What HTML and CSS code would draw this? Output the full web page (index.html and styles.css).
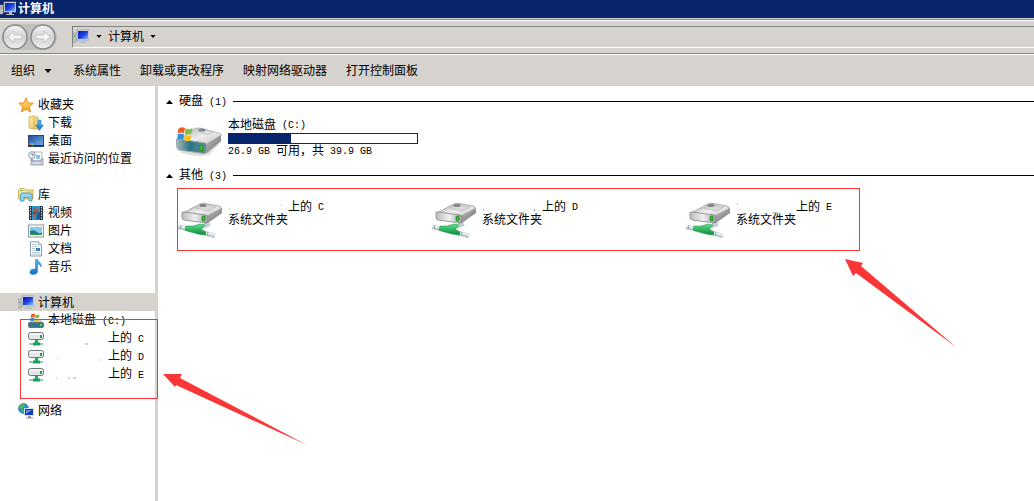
FILE: index.html
```html
<!DOCTYPE html>
<html lang="zh-CN">
<head>
<meta charset="utf-8">
<title>计算机</title>
<link rel="stylesheet" href="styles.css">
</head>
<body>
<svg class="defs" aria-hidden="true">
  <defs>
    <linearGradient id="g-screen" x1="0" y1="0" x2="1" y2="1"><stop offset="0" stop-color="#0a20b0"/><stop offset=".5" stop-color="#1a3ee0"/><stop offset="1" stop-color="#8ab4f8"/></linearGradient>
    <linearGradient id="g-star" x1="0" y1="0" x2="0" y2="1"><stop offset="0" stop-color="#ffe680"/><stop offset="1" stop-color="#f9a01b"/></linearGradient>
    <linearGradient id="g-folder" x1="0" y1="0" x2="1" y2="1"><stop offset="0" stop-color="#fdf3b8"/><stop offset="1" stop-color="#e5bd4c"/></linearGradient>
    <linearGradient id="g-desk" x1="0" y1="0" x2="1" y2="1"><stop offset="0" stop-color="#1b4a9c"/><stop offset="1" stop-color="#7db4ee"/></linearGradient>
    <linearGradient id="g-blue" x1="0" y1="0" x2="0" y2="1"><stop offset="0" stop-color="#54b8f0"/><stop offset="1" stop-color="#1272c0"/></linearGradient>
    <linearGradient id="g-top" x1="0" y1="0" x2="1" y2="1"><stop offset="0" stop-color="#a8a8a8"/><stop offset=".5" stop-color="#eeeeee"/><stop offset="1" stop-color="#bdbdbd"/></linearGradient>
    <linearGradient id="g-front" x1="0" y1="0" x2="1" y2="0"><stop offset="0" stop-color="#bcbcbe"/><stop offset=".5" stop-color="#f0f0f4"/><stop offset="1" stop-color="#a4a4a8"/></linearGradient>
    <linearGradient id="g-teal" x1="0" y1="0" x2="1" y2="0"><stop offset="0" stop-color="#a9bcc2"/><stop offset=".45" stop-color="#2a7488"/><stop offset="1" stop-color="#6c9294"/></linearGradient>
    <linearGradient id="g-side" x1="0" y1="0" x2="1" y2="1"><stop offset="0" stop-color="#c8c8c8"/><stop offset="1" stop-color="#6c6c6c"/></linearGradient>
    <linearGradient id="g-nav" x1="0" y1="0" x2="0" y2="1"><stop offset="0" stop-color="#f4f4f4"/><stop offset=".5" stop-color="#d2d2d2"/><stop offset="1" stop-color="#eeeeee"/></linearGradient>
    <linearGradient id="g-green" x1="0" y1="0" x2="0" y2="1"><stop offset="0" stop-color="#5fe08a"/><stop offset="1" stop-color="#0a8a3c"/></linearGradient>

    <symbol id="i-pc" viewBox="0 0 16 16">
      <rect x="0" y="4" width="3" height="9" fill="#c9cdd0" stroke="#888" stroke-width=".6"/><rect x="1" y="6" width="1" height="2" fill="#35c83a"/>
      <rect x="4" y="1" width="12" height="10" fill="#e4e8ee" stroke="#8d96a3" stroke-width=".7"/>
      <rect x="5" y="2" width="10" height="8" fill="url(#g-screen)"/>
      <path d="M9 11h3v2h2v1H6v-1h3z" fill="#b7bec6"/>
    </symbol>
    <symbol id="i-star" viewBox="0 0 16 16"><path d="M8 .8l2 5 5.300.4-4 3.500 1.300 5.300L8 12.100l-4.600 2.900 1.300-5.300-4-3.500L6 5.800z" fill="url(#g-star)" stroke="#e08a1c" stroke-width=".9"/></symbol>
    <symbol id="i-down" viewBox="0 0 16 16"><path d="M1 2l5-1.500 1 1.500h3v12H6l-5-1z" fill="url(#g-folder)" stroke="#cfa23c" stroke-width=".7"/><path d="M6 2v12" stroke="#d9b352"/><path d="M10 5h3v5h2.500l-4 5.500-4-5.500H10z" fill="url(#g-blue)" stroke="#2b7cc0" stroke-width=".5"/></symbol>
    <symbol id="i-desk" viewBox="0 0 16 16"><rect x=".5" y="2.500" width="15" height="11" fill="url(#g-desk)" stroke="#2a4670"/><path d="M1 12h14v1H1z" fill="#16305c"/><path d="M1.500 10h2v2h-2z" fill="#f1802c"/><path d="M3.500 10.500h2v2h-2z" fill="#7ed04c"/></symbol>
    <symbol id="i-recent" viewBox="0 0 16 16"><path d="M5 1h9v9H5z" fill="#fafcfe" stroke="#8ea2b4" stroke-width=".8"/><path d="M8 4h4v4H8z" fill="#8cc4ea"/><circle cx="4" cy="4" r="3.300" fill="#f3f6f8" stroke="#8a9aa8"/><path d="M4 2v2h2" fill="none" stroke="#456" stroke-width=".8"/><path d="M4 8v2h9V8h2v6H3V8z" fill="#c9d2da" stroke="#7c8b98" stroke-width=".7"/><path d="M6 12h6" stroke="#eee"/></symbol>
    <symbol id="i-lib" viewBox="0 0 16 16"><path d="M.500 3l1-1.500h5L8 3h7v9H.500z" fill="url(#g-folder)" stroke="#d0a340" stroke-width=".8"/><path d="M2 3.500h3" stroke="#5fbf4e"/><path d="M2.500 14V8l1-2h9l1.500 2v6h-3v-3.500h-5V14z" fill="#8dd5f5" stroke="#3b96c9" stroke-width=".8"/></symbol>
    <symbol id="i-video" viewBox="0 0 16 16"><path d="M1 1h14v14H1z" fill="#26343e"/><path d="M4 1h8v14H4z" fill="#2e94cc"/><path d="M5 3l3 1 2-1 1 4-3 1-1 4-2-1z" fill="#b0593c"/><path d="M9 9l3-1v6l-4 1z" fill="#175c96"/><path d="M4 8h8" stroke="#20303c" stroke-width=".7"/><path d="M2.500 2v13M13.500 2v13" stroke="#eef" stroke-dasharray="1.300 1.300"/></symbol>
    <symbol id="i-image" viewBox="0 0 16 16"><rect x=".5" y="2" width="15" height="12" fill="#fff" stroke="#8c989f"/><path d="M2 4h12v8H2z" fill="#85c9ee"/><path d="M2 8q4-2 7 1t5 0v3H2z" fill="#187c8c"/><path d="M2 10q6 2 12 0v2H2z" fill="#2b9950"/></symbol>
    <symbol id="i-doc" viewBox="0 0 16 16"><path d="M2.500.8h8l3 3V15h-11z" fill="#fcfdff" stroke="#7f93a5" stroke-width=".9"/><path d="M10.500.8v3h3" fill="#d8e4ee" stroke="#7f93a5" stroke-width=".7"/><path d="M4 3.500h5M4 5.500h5M4 7.500h3M4 9.500h3M4 11.500h8M4 13.200h8" stroke="#9eb0bf" stroke-width=".7"/><path d="M8 7h4v3H8z" fill="#2e83cc"/></symbol>
    <symbol id="i-music" viewBox="0 0 16 16"><path d="M7.500.5h2c.5 2.500 4.500 3.200 3.700 7.500-1-2-2.200-2.700-3.700-3v7.500c0 2-2 3-4.300 3S1.500 14.500 2 12.500s3-3 5.500-2.200z" fill="url(#g-blue)" stroke="#1d78bd" stroke-width=".5"/></symbol>
    <symbol id="i-flag" viewBox="0 0 16 16"><path d="M1 3q3-3 7-1L7 8Q4 6 0 8z" fill="#ee5a24"/><path d="M8.500 2.500Q12 4.500 16 2l-1 6q-4 2-7 .5z" fill="#7cc142"/><path d="M0 9q4-2 7 0l-1 6q-3-2-6-.5z" fill="#2f92e0"/><path d="M7.700 9.500q4 2 7 .5l-1 5.500q-4 1.500-7-.5z" fill="#fcc423"/></symbol>
    <symbol id="i-sys" viewBox="0 0 16 16"><path d="M2 8l2-2h8l3 3H1z" fill="#ccc"/><rect x=".5" y="9.500" width="15" height="5" rx="1" fill="#33788c" stroke="#627680"/><path d="M12 11h2v2h-2z" fill="#58e040"/><use href="#i-flag" x="2" y="0" width="10" height="9"/></symbol>
    <symbol id="i-net" viewBox="0 0 16 16"><rect x=".5" y="1.500" width="15" height="7" rx="2" fill="#e4e6e8" stroke="#73777b"/><path d="M2 3h12" stroke="#fff"/><path d="M12 4h2v3h-2z" fill="#22a82a"/><path d="M7 9h3v3H7z" fill="#16a761"/><path d="M1 12h14v2H1z" fill="#8bcdae"/><path d="M5 11.500h7v3H5z" fill="#11a45b"/></symbol>
    <symbol id="i-network" viewBox="0 0 16 16"><circle cx="5.500" cy="5.500" r="5" fill="#2b8fd8" stroke="#246aa6" stroke-width=".6"/><path d="M2 2q3-2 5 0L5 5 3 6 1 5zM3 7l3 1-1 2.500z" fill="#53bb4c"/><path d="M6.500 5.500h9v7h-9z" fill="#1537ba" stroke="#dbe3ec"/><path d="M8 7h6L8 11z" fill="#5d91ee"/><path d="M10 13h3v1.500h2v1H8v-1h2z" fill="#8d9aa6"/></symbol>
    <symbol id="i-cdrive" viewBox="0 0 46 34">
      <path d="M3 29q16 6 30 3l13-14-12 4z" fill="#999" opacity=".3"/>
      <path d="M1 17L18 6q3-1.500 6-1l19 5q3 1 2 3L30 23z" fill="url(#g-top)" stroke="#999" stroke-width=".6"/>
      <path d="M21 8l6-2 11 3-6 3z" fill="#dedede" stroke="#aaa" stroke-width=".5"/><ellipse cx="26" cy="7" rx="3.500" ry="1.500" fill="#7d868d"/>
      <path d="M30 21l15-9v6L31 30h-3z" fill="url(#g-side)"/>
      <path d="M0 17q0-2 3-1l26 4q2 .5 2 3l-.5 6q-.5 2-3 1.500L3 27q-2-.5-2-3z" fill="url(#g-teal)" stroke="#a4a4a4" stroke-width="1"/>
      <rect x="24" y="22" width="3" height="6" rx="1" fill="#35d32c" stroke="#155718" stroke-width=".6"/>
      <use href="#i-flag" x="1" y="3" width="16" height="15"/>
    </symbol>
    <symbol id="i-ndrive" viewBox="0 0 46 38">
      <path d="M17 29l15-6" stroke="#c3cfd3" stroke-width="4"/>
      <g transform="translate(3 1)">
      <path d="M2 11L19 2q2-1 5-.5L38 4q3 1 2 3L25 16z" fill="url(#g-top)" stroke="#8d8d8d" stroke-width=".7"/>
      <path d="M15 6l8-3 12 2-8 4z" fill="#d8d8d8" stroke="#aaa" stroke-width=".5"/><ellipse cx="22" cy="3.500" rx="3.500" ry="1.300" fill="#77777c"/>
      <path d="M25 14L41 6v5L27 21l-4 1z" fill="url(#g-side)"/>
      <path d="M1 11q0-1.500 2-1l22 3q2 .5 2 2.500l-.5 4q-.5 1.700-3 1.200L3 18q-2-.5-2-2.500z" fill="url(#g-front)" stroke="#858588" stroke-width=".8"/>
      <rect x="21" y="14" width="3" height="5" rx="1" fill="#2fc729" stroke="#1a5e1e" stroke-width=".6"/>
      </g>
      <path d="M0 26l9 2M26 32l11 3" stroke="#bccacf" stroke-width="4.500"/><path d="M0 25l9 2M26 31l11 3" stroke="#f2f6f6" stroke-width="1.500"/>
      <path d="M3 24l-1 4M30 31l-1 4" stroke="#93a5ac" stroke-width="1"/>
      <path d="M8 25l7 0 7-2 5 1-4 4 5 3-1 3-7-1-11-3-2-1z" fill="url(#g-green)" stroke="#0d9346" stroke-width=".5"/>
    </symbol>
    <symbol id="i-caret" viewBox="0 0 7 4"><path d="M0 0h7L3.500 4z" fill="#000"/></symbol>
    <symbol id="i-up" viewBox="0 0 7 4"><path d="M0 4h7L3.500 0z" fill="#000"/></symbol>
  </defs>
</svg>

<header class="titlebar"><svg class="icon"><use href="#i-pc"/></svg><h1>计算机</h1></header>

<nav class="navbar" aria-label="地址">
  <div class="history">
    <button type="button" aria-label="后退"><svg viewBox="0 0 26 26"><circle cx="13" cy="13" r="12" fill="url(#g-nav)" stroke="#858a8e" stroke-width="1.500"/><path d="M6 13l6-6v4h8v4h-8v4z" fill="#f4f4f4" stroke="#c4c4c4"/></svg></button>
    <button type="button" aria-label="前进"><svg viewBox="0 0 26 26"><circle cx="13" cy="13" r="12" fill="url(#g-nav)" stroke="#858a8e" stroke-width="1.500"/><path d="M20 13l-6-6v4H6v4h8v4z" fill="#f4f4f4" stroke="#c4c4c4"/></svg></button>
  </div>
  <div class="address">
    <svg class="icon"><use href="#i-pc"/></svg>
    <svg class="caret"><use href="#i-caret"/></svg>
    <button type="button">计算机</button>
    <svg class="caret"><use href="#i-caret"/></svg>
  </div>
</nav>

<div class="toolbar" role="toolbar">
  <button type="button" class="organize">组织<svg class="caret large"><use href="#i-caret"/></svg></button>
  <button type="button">系统属性</button>
  <button type="button">卸载或更改程序</button>
  <button type="button">映射网络驱动器</button>
  <button type="button">打开控制面板</button>
</div>

<div class="body">
  <aside class="sidebar">
    <ul class="tree">
      <li><a href="#fav"><svg class="icon"><use href="#i-star"/></svg>收藏夹</a>
        <ul>
          <li><a href="#downloads"><svg class="icon"><use href="#i-down"/></svg>下载</a></li>
          <li><a href="#desktop"><svg class="icon"><use href="#i-desk"/></svg>桌面</a></li>
          <li><a href="#recent"><svg class="icon"><use href="#i-recent"/></svg>最近访问的位置</a></li>
        </ul>
      </li>
      <li><a href="#lib"><svg class="icon"><use href="#i-lib"/></svg>库</a>
        <ul>
          <li><a href="#video"><svg class="icon"><use href="#i-video"/></svg>视频</a></li>
          <li><a href="#pictures"><svg class="icon"><use href="#i-image"/></svg>图片</a></li>
          <li><a href="#docs"><svg class="icon"><use href="#i-doc"/></svg>文档</a></li>
          <li><a href="#music"><svg class="icon"><use href="#i-music"/></svg>音乐</a></li>
        </ul>
      </li>
      <li><a href="#computer" class="selected"><svg class="icon"><use href="#i-pc"/></svg>计算机</a>
        <ul>
          <li><a href="#c"><svg class="icon"><use href="#i-sys"/></svg><span>本地磁盘<span class="latin"> (C:)</span></span></a></li>
          <li><a href="#nc"><svg class="icon"><use href="#i-net"/></svg><svg class="host" viewBox="0 0 56 12"><path d="M37 11h3" stroke="#aaa"/></svg><span>上的<span class="latin"> C</span></span></a></li>
          <li><a href="#nd"><svg class="icon"><use href="#i-net"/></svg><svg class="host" viewBox="0 0 56 12"><path d="M9 7h1M52 9h1" stroke="#aaa"/></svg><span>上的<span class="latin"> D</span></span></a></li>
          <li><a href="#ne"><svg class="icon"><use href="#i-net"/></svg><svg class="host" viewBox="0 0 56 12"><path d="M8 9h1M20 9h2M25 9h3" stroke="#aaa"/></svg><span>上的<span class="latin"> E</span></span></a></li>
        </ul>
      </li>
      <li><a href="#network"><svg class="icon"><use href="#i-network"/></svg>网络</a></li>
    </ul>
  </aside>

  <main class="content">
    <section>
      <h2><svg class="caret"><use href="#i-up"/></svg><span>硬盘<span class="latin"> (1)</span></span></h2>
      <div class="tiles disks">
        <article class="tile">
          <svg class="drive"><use href="#i-cdrive"/></svg>
          <div class="info">
            <p>本地磁盘<span class="latin"> (C:)</span></p>
            <div class="usage"><div class="used" style="width:33%"></div></div>
            <p><span class="latin">26.9 GB </span>可用，共<span class="latin"> 39.9 GB</span></p>
          </div>
        </article>
      </div>
    </section>
    <section>
      <h2><svg class="caret"><use href="#i-up"/></svg><span>其他<span class="latin"> (3)</span></span></h2>
      <div class="tiles shares">
        <article class="tile"><svg class="drive"><use href="#i-ndrive"/></svg><div class="info"><p><svg class="host" viewBox="0 0 60 12"><path d="M1 7h1M53 3h1" stroke="#aaa"/></svg>上的<span class="latin"> C</span></p><p>系统文件夹</p></div></article>
        <article class="tile"><svg class="drive"><use href="#i-ndrive"/></svg><div class="info"><p><svg class="host" viewBox="0 0 60 12"><path d="M1 8h1M37 11h5M52 9l1-2" stroke="#888"/></svg>上的<span class="latin"> D</span></p><p>系统文件夹</p></div></article>
        <article class="tile"><svg class="drive"><use href="#i-ndrive"/></svg><div class="info"><p><svg class="host" viewBox="0 0 60 12"><path d="M1 2h1M37 11h5" stroke="#888"/></svg>上的<span class="latin"> E</span></p><p>系统文件夹</p></div></article>
      </div>
    </section>
  </main>
</div>

<svg class="marks" width="1034" height="501" aria-hidden="true">
  <g fill="none" stroke="#fb3636"><rect x="20.5" y="319.500" width="137" height="79"/><rect x="177.500" y="188.500" width="682" height="62"/></g>
  <g fill="#fb3636"><path d="M163 374l19 0-2 4L307 445 176 385l-1 2z"/><path d="M845 259l18 4-2 3 95 81-100-74-3 3z"/></g>
</svg>
</body>
</html>
```
FILE: styles.css
```css
* { box-sizing: border-box; }
body {
  margin: 0;
  min-height: 100vh;
  display: flex;
  flex-direction: column;
  position: relative;
  overflow: hidden;
  background: #fff;
  color: #000;
  font: 12px/18px "Liberation Sans", "Noto Sans CJK SC", sans-serif;
}
h1, h2, p, ul { margin: 0; padding: 0; font: inherit; }
ul { list-style: none; }
a { color: inherit; text-decoration: none; }
button { margin: 0; padding: 0; border: 0; background: none; color: inherit; font: inherit; }
svg { display: block; flex: none; }
.defs { position: absolute; width: 0; height: 0; }
.icon { width: 16px; height: 16px; }
.caret { width: 6px; height: 3px; }
.caret.large { width: 8px; height: 4px; }
.latin { font-family: "Liberation Mono", monospace; font-size: 10px; white-space: pre; }

.titlebar { display: flex; align-items: center; gap: 2px; height: 18px; background: #08246b; color: #fff; }
.titlebar h1 { font-weight: 700; }

.navbar {
  display: flex;
  align-items: center;
  gap: 15px;
  height: 37px;
  padding-left: 2px;
  background: #d6d3ce;
  border-top: 1px solid #d6d3ce;
  border-bottom: 1px solid #fff;
  box-shadow: inset 0 1px #848284, inset 0 2px #fff, inset 0 -1px #848284;
}
.history { display: flex; gap: 2px; padding-right: 1px; border-radius: 14px; background: #c2c0bd; }
.history svg { width: 26px; height: 26px; }
.address {
  flex: 1;
  display: flex;
  align-items: center;
  gap: 6px;
  height: 22px;
  border: 1px solid #848284;
  border-right: 0;
  border-bottom-color: #fff;
}
.address .icon { margin-right: 1px; }

.toolbar { display: flex; align-items: center; gap: 19px; height: 31px; padding-left: 11px; background: #d6d3ce; }
.organize { display: flex; align-items: center; gap: 9px; padding-right: 2px; }

.body { flex: 1; display: flex; }
.sidebar { width: 158px; padding-top: 9px; border-right: 3px solid #d6d3ce; flex: none; }
.tree > li { margin-bottom: 18px; }
.tree a { display: flex; align-items: center; gap: 4px; height: 18px; padding: 2px 0 0 18px; white-space: pre; }
.tree ul a { padding-left: 28px; }
.tree .selected { background: #d6d3ce; }
.host { width: 60px; height: 12px; }
.tree .host { width: 56px; }

.content { flex: 1; min-width: 0; padding: 7px 0 0 8px; }
.content h2 { display: flex; align-items: center; gap: 6px; height: 17px; }
.content h2 .caret { width: 7px; height: 4px; }
.content h2::after { content: ""; flex: 1; height: 1px; background: #000; }
.tiles { display: grid; grid-template-columns: repeat(auto-fill, 254px); }
.disks { padding: 9px 0 9px 10px; }
.shares { padding: 17px 0 0 12px; }
.tile { display: flex; gap: 6px; }
.tile p { display: flex; align-items: center; height: 13px; line-height: 13px; white-space: pre; }
.drive { width: 46px; height: 38px; }
.disks .drive { height: 34px; margin-top: 4px; }
.shares .tile { gap: 4px; }
.usage { width: 190px; height: 11px; margin: 1px 0; border: 1px solid #08246b; }
.used { height: 100%; background: #08246b; }

.marks { position: absolute; top: 0; left: 0; pointer-events: none; }
```
